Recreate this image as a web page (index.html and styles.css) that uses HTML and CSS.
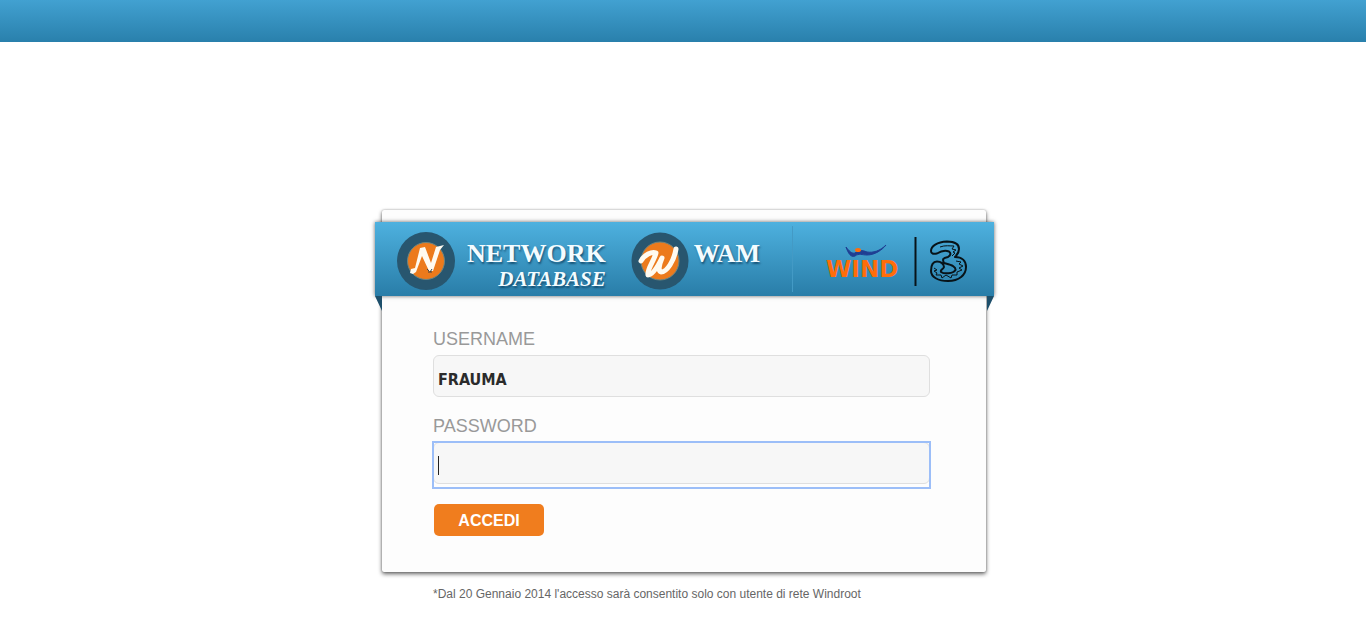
FILE: index.html
```html
<!DOCTYPE html>
<html lang="it">
<head>
<meta charset="utf-8">
<title>Network Database - WAM</title>
<link rel="stylesheet" href="styles.css">
</head>
<body>
<header class="topbar"></header>
<main class="login">
  <section class="card">
    <div class="ribbon">
      <svg class="emblem" viewBox="0 0 58 58" aria-hidden="true">
        <circle class="emblem-ring" cx="29" cy="29" r="29"/>
        <circle class="emblem-disc" cx="29" cy="29" r="18.5"/>
        <path class="emblem-fill" d="M14 37L18 36L23 16L28 15L34 31L39 15L47 13L43 18L36 39L32 39L25 24L19 40L16 42L13 41Z"/>
        <path class="emblem-spot" d="M30 37l2 2m3-2l-2 3m-2 0h4"/>
      </svg>
      <h1 class="brand">
        <span class="brand-name">NETWORK</span>
        <span class="brand-sub">DATABASE</span>
      </h1>
      <svg class="emblem emblem-second" viewBox="0 0 58 58" aria-hidden="true">
        <circle class="emblem-ring" cx="29" cy="29" r="28.5"/>
        <circle class="emblem-disc" cx="29" cy="29" r="19"/>
        <path class="emblem-stroke" d="M10 29C13 23 21 19 25 21C23 29 16 37 17 43C22 43 27 34 31 26C28 33 27 39 30 40C36 40 43 29 45 17"/>
      </svg>
      <p class="brand-name wam">WAM</p>
      <div class="partners">
        <svg class="partner-logos" viewBox="0 0 142 52" role="img" aria-label="Wind, 3">
          <path class="wind-wave" d="M20 11C22 17 25 22 29 20C33 17 36 19 41 19C49 19 56 14 60 9C54 15 47 17 41 16C36 14 32 14 29 17C26 18 23 15 20 11Z"/>
          <ellipse class="wind-dot" cx="32" cy="14" rx="3" ry="2"/>
          <text class="wind-text" x="0" y="41">WIND</text>
          <path class="separator" d="M89.500 1V50"/>
          <path class="three" d="M105 15C105 10 111 6 121 5.500C128 5.500 133 8 133 13C133 17 131 19 129 21C136 21 140 25 140 31C140 39 133 45 122 45C112 45 105 41 105 35C105 29 107 25.500 111 25.500C115 25.500 118 28 118 31C117 34 114 33 115 36C118 38 127 38 129.500 34C130 30 125 29 118 27C116 23 117 22 122 21C125 19 125 17 123 15.500C119 14 115 15 111 17.500C107 18 105 18 105 15Z"/>
          <path class="three-inner" d="M114 11C119 9 124 10 128 10L126 13L130 14L127 16L129 17L126 20M108 32L111 34L108 35L111 37L110 39L115 39L116 42L120 39L125 42L126 39L131 39L131 36L136 34L133 32L137 30L133 28L135 26L130 25"/>
        </svg>
      </div>
    </div>
    <form class="form">
      <label class="label" for="username">USERNAME</label>
      <div class="field"><input class="input" id="username" type="text" value="FRAUMA"></div>
      <label class="label" for="password">PASSWORD</label>
      <div class="field"><input class="input input-active" id="password" type="password"></div>
      <button class="submit" type="button">ACCEDI</button>
    </form>
  </section>
  <p class="note">*Dal 20 Gennaio 2014 l'accesso sarà consentito solo con utente di rete Windroot</p>
</main>
</body>
</html>
```
FILE: styles.css
```css
* {
  box-sizing: border-box;
}

body {
  margin: 0;
  background: #fff;
  font-family: "Liberation Sans", Arial, sans-serif;
}

.topbar {
  height: 42px;
  background: linear-gradient(#42a1d1, #2980ac);
}

.login {
  max-width: 606px;
  margin: 168px auto 0;
  padding-left: 2px;
}

.card {
  padding-top: 12px;
  background: #fdfdfd;
  border-radius: 2px;
  box-shadow: 0 2px 4px rgba(0, 0, 0, 0.6), 0 0 2px rgba(0, 0, 0, 0.3);
}

.ribbon {
  position: relative;
  display: flex;
  align-items: center;
  height: 74px;
  margin: 0 -8px 0 -7px;
  padding-left: 22px;
  background: linear-gradient(#4eb1df, #297da8);
  box-shadow: 0 0 4px rgba(0, 0, 0, 0.6);
}

.ribbon::before,
.ribbon::after {
  content: "";
  position: absolute;
  top: 100%;
  width: 7px;
  height: 15px;
  background: #1d4f6b;
}

.ribbon::before {
  left: 0;
  clip-path: polygon(0 0, 100% 0, 100% 100%);
}

.ribbon::after {
  right: 0;
  clip-path: polygon(0 0, 100% 0, 0 100%);
}

.emblem {
  flex: none;
  width: 58px;
  height: 58px;
  margin-top: 4px;
}

.emblem-ring {
  fill: #28566f;
}

.emblem-disc {
  fill: #ec7a1c;
  stroke: #6d8580;
  stroke-width: 1;
}

.emblem-fill {
  fill: #fffaf0;
}

.emblem-spot {
  fill: none;
  stroke: #40464a;
  stroke-width: 1;
}

.emblem-stroke {
  fill: none;
  stroke: #fffaf0;
  stroke-width: 5;
  stroke-linecap: round;
  stroke-linejoin: round;
}

.brand {
  display: flex;
  flex-direction: column;
  align-items: flex-end;
  margin: 14px 0 0 12px;
}

.brand-name,
.brand-sub {
  color: #f4fcff;
  font-family: "Liberation Serif", "Times New Roman", serif;
  font-weight: bold;
  text-shadow: 1px 2px 2px rgba(0, 40, 70, 0.6);
}

.brand-name {
  font-size: 26px;
  line-height: 26px;
}

.brand-sub {
  font-size: 21px;
  font-style: italic;
  line-height: 24px;
}

.emblem-second {
  margin-left: 25px;
}

.wam {
  margin: 0 0 10px 5px;
}

.partners {
  display: flex;
  margin-left: auto;
  padding: 10px 26px 4px 33px;
  border-left: 1px solid #439ac5;
}

.partner-logos {
  width: 142px;
  height: 52px;
}

.wind-wave {
  fill: #1f3f93;
  stroke: #1f3f93;
  stroke-width: 1;
}

.wind-dot,
.wind-text {
  fill: #ff6d0a;
}

.wind-text {
  font: bold 23px "DejaVu Sans", sans-serif;
}

.separator {
  stroke: #081318;
  stroke-width: 2;
}

.three,
.three-inner {
  fill: none;
  stroke: #081318;
  stroke-width: 2;
  stroke-linejoin: round;
}

.three-inner {
  stroke-width: 1;
}

.form {
  display: flex;
  flex-direction: column;
  padding: 33px 56px 36px 51px;
}

.label {
  color: #999;
  font-size: 18px;
  line-height: 21px;
}

.field {
  height: 42px;
  margin: 5px 0 19px;
  border: 1px solid #dfdfdf;
  border-radius: 6px;
  background: #f7f7f7;
}

.input {
  display: block;
  width: 100%;
  height: 44px;
  padding: 3px 4px 1px;
  border: 0;
  outline: 0;
  background: transparent;
  color: #2b2b2b;
  font: bold 16px "DejaVu Sans Condensed", Tahoma, sans-serif;
}

.input-active {
  background: linear-gradient(#222, #222) 4px 13px / 1px 19px no-repeat;
  outline: 2px solid #9cbef8;
}

.submit {
  width: 110px;
  height: 32px;
  margin: 1px 0 0 1px;
  padding: 2px 0 0;
  border: 0;
  border-radius: 5px;
  background: #f07d1e;
  color: #fff;
  font: bold 16px "Liberation Sans", Arial, sans-serif;
}

.note {
  margin: 15px 0 0 51px;
  color: #666;
  font-size: 12px;
  line-height: 14px;
}
```
